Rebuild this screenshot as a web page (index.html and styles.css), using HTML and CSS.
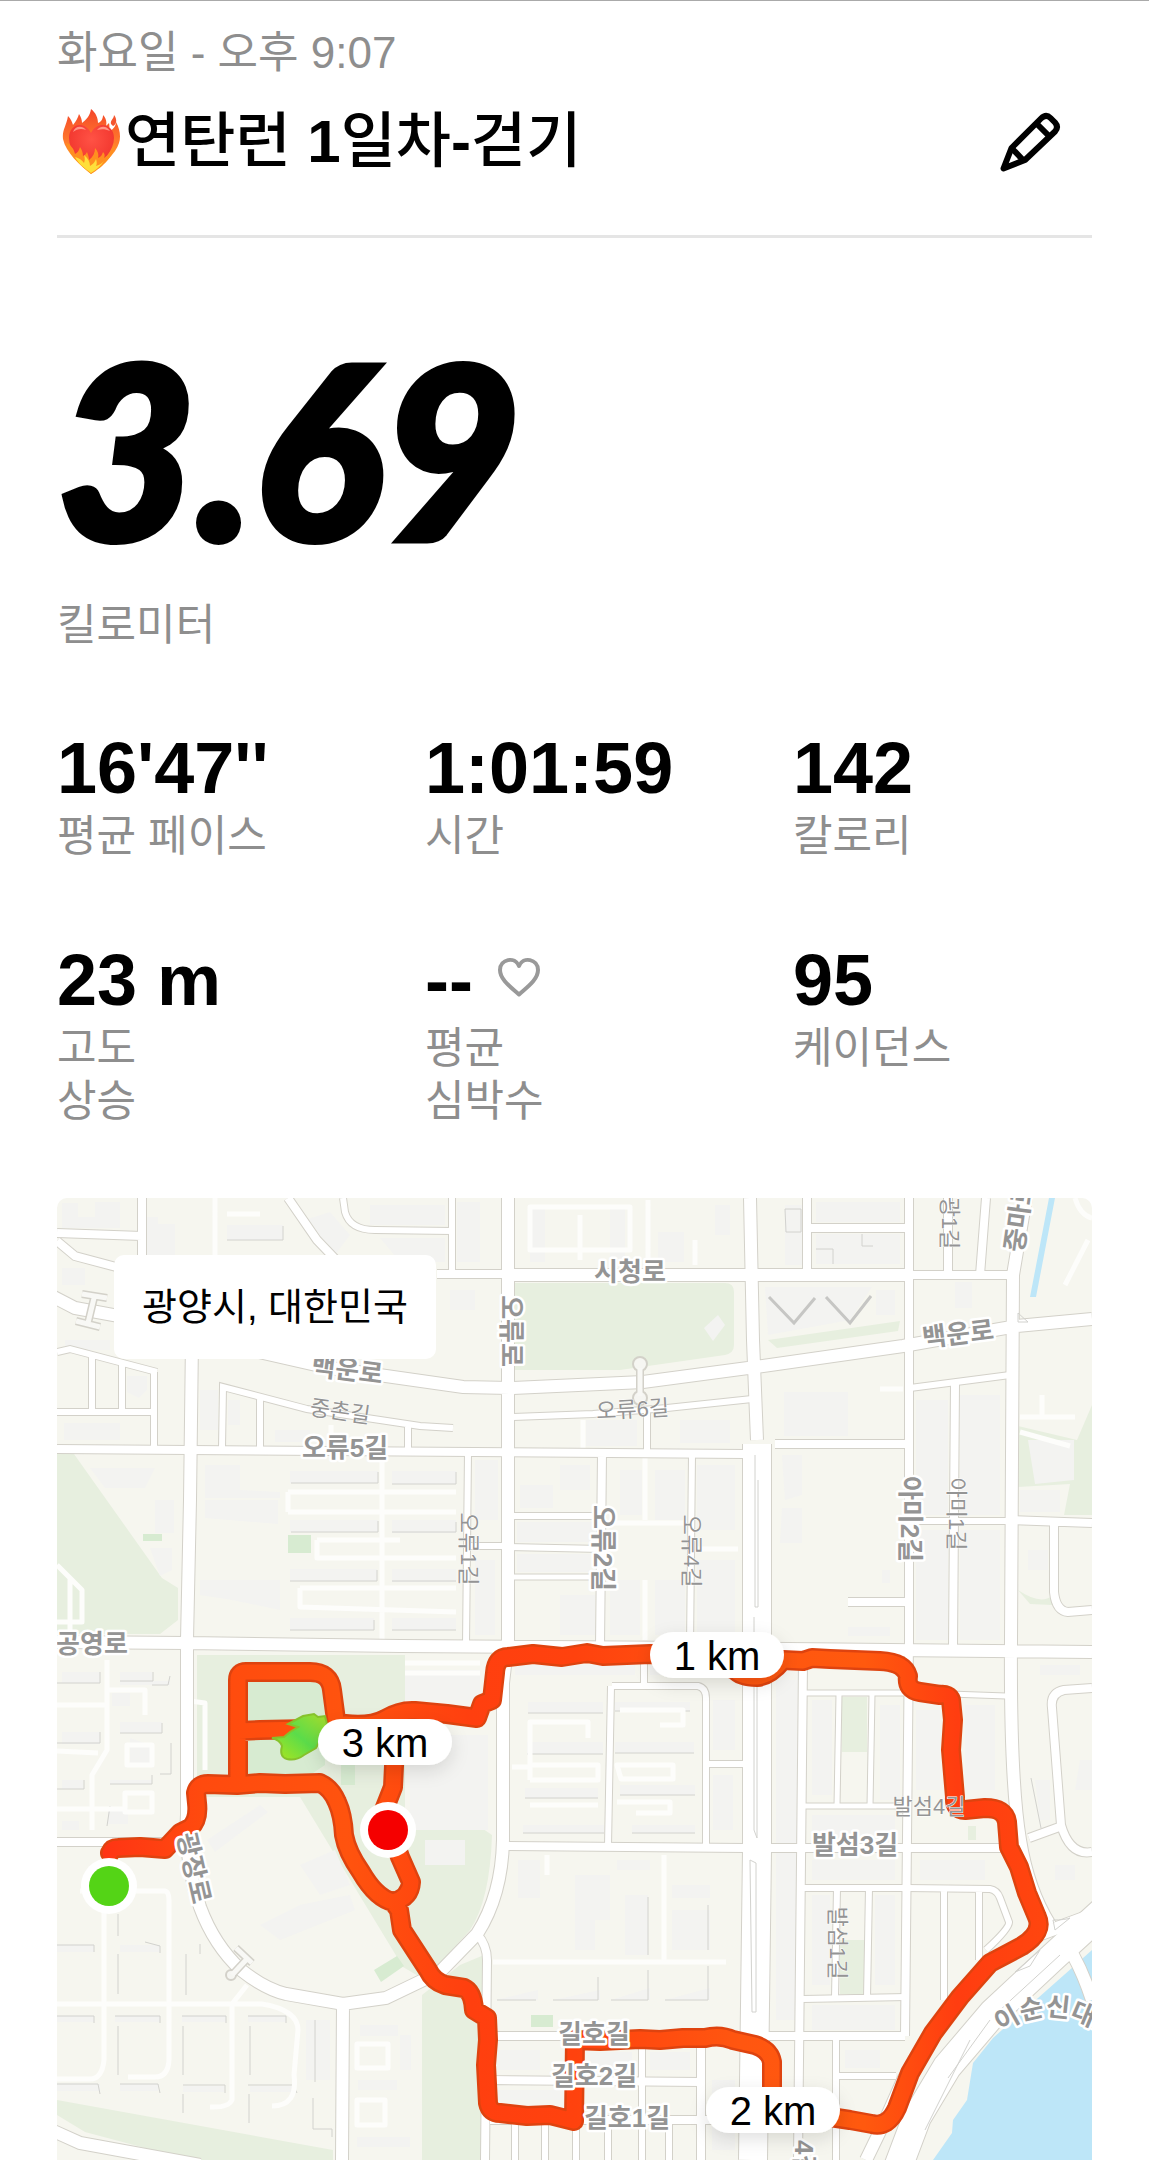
FILE: index.html
```html
<!DOCTYPE html>
<html lang="ko">
<head>
<meta charset="utf-8">
<meta name="viewport" content="width=device-width, initial-scale=1">
<title>연탄런 1일차-걷기</title>
<link rel="stylesheet" href="styles.css">
</head>
<body>
<main class="run">
  <header class="run-header">
    <p class="date">화요일 - 오후 9:07</p>
    <div class="title-row">
      <svg class="emoji" viewBox="0 0 58 66" role="img" aria-label="불타는 하트">
        <defs>
          <linearGradient id="flame" x1="0" y1="0" x2="0" y2="1"><stop offset="0" stop-color="#f4452a"/><stop offset=".5" stop-color="#ff7a2c"/><stop offset="1" stop-color="#ffb52b"/></linearGradient>
          <radialGradient id="heart" cx=".5" cy=".3" r=".7"><stop offset="0" stop-color="#ff5245"/><stop offset="1" stop-color="#ee2f28"/></radialGradient>
        </defs>
        <path fill="url(#flame)" d="M29 65C18 56 4 44 1 30 0 21 4 18 6 7c3 3 4 6 5 9 3-4 5-7 6-11 2 3 3 6 3 9 4-3 8-7 9-14 5 4 7 9 7 14 3-1 5-4 5-8 3 3 4 7 3 11l3-3c1 4 0 7-1 9 5-2 8-6 8-10 4 7 5 15 3 21C54 45 40 56 29 65Z"/>
        <path fill="#f4552f" d="M49 15c-1-4 3-5 3-9 4 5 2 10-1 11Z"/>
        <path fill="url(#heart)" d="M29 63C17 53 7 41 7 29 7 15 22 11 29 24 36 11 52 15 52 29 52 41 41 53 29 63Z"/>
        <path fill="#ff9588" d="M11 23c2-6 9-7 13-2-5-2-9-1-13 2ZM35 21c4-5 10-4 13 1-5-2-8-2-13-1Z"/>
        <path fill="#ff8f20" d="M29 65C19 57 7 46 4 34c5 2 8 6 9 11 2-1 4-3 5-7 2 3 3 6 3 9 2-1 3-2 4-4 1 3 2 5 2 8 4-3 6-7 6-12 3 3 4 7 3 10 3-1 4-3 5-6 2 2 2 4 1 6 5-3 8-8 11-14 0 11-12 23-24 30Z"/>
        <path fill="#ffdf3a" d="M29 64c-7-5-13-10-16-16 4 1 7 3 9 6 1-3 1-5 0-8 4 3 6 7 6 11 3-2 5-4 6-7 1 3 1 5 0 7 4-1 6-3 8-5-3 5-8 9-13 12Z"/>
      </svg>
      <h1 class="title">연탄런 <b>1</b>일차<b>-</b>걷기</h1>
      <button class="edit" type="button" aria-label="편집">
        <svg viewBox="0 0 64 64" class="edit-icon">
          <path d="M5.500 58.500 13.500 38 43 8.500Q48 3.500 52.500 8L57 12.500Q61 17 57 21.500L27 50Z"/>
          <path d="M39 14 50 25M13.500 38 25 50"/>
        </svg>
      </button>
    </div>
  </header>

  <section class="distance">
    <p class="distance-value">3.69</p>
    <p class="label">킬로미터</p>
  </section>

  <dl class="stats">
    <div class="stat"><dd class="value">16'47''</dd><dt class="label">평균 페이스</dt></div>
    <div class="stat"><dd class="value">1:01:59</dd><dt class="label">시간</dt></div>
    <div class="stat"><dd class="value">142</dd><dt class="label">칼로리</dt></div>
    <div class="stat"><dd class="value">23 m</dd><dt class="label">고도<br>상승</dt></div>
    <div class="stat">
      <dd class="value">--
        <svg class="heart" viewBox="0 0 44 40" aria-hidden="true"><path d="M22 37.500C15 31 3 23 3 13 3 2 18-1 22 9 26-1 41 2 41 13 41 23 29 31 22 37.500Z"/></svg>
      </dd>
      <dt class="label">평균<br>심박수</dt>
    </div>
    <div class="stat"><dd class="value">95</dd><dt class="label">케이던스</dt></div>
  </dl>

  <section class="map" aria-label="경로 지도">
    <svg class="map-canvas" viewBox="57 1198 1035 962">
      <defs>
        <g id="roads">
          <g class="w5">
            <path d="M508 1577H602M805 1693H905M950 1694 1006 1696M839 1694 837 1806M872 1694 870 1806M803 1806H905"/>
          </g>
          <g class="w6">
            <path d="M513 1417 593 1414 667 1408 752 1399M910 1388 1010 1375M452 1198V1274M343 1198 345 1212Q350 1230 375 1230L452 1231M57 1352 70 1349 157 1372M92 1356V1412M122 1364V1412M154 1372V1449M57 1412H154M222 1448 223 1387 307 1409 420 1426 453 1428M260 1398V1448M408 1425V1450M468 1452 466 1645M647 1408V1452M692 1455 690 1647M508 1516H602M508 1547 602 1549M467 1546H507M909 1521H1011"/>
            <path d="M612 1686H698Q706 1688 706 1698V1846M611 1686 608 1846M644 1655V1686M707 1764H745M642 2042V2160M515 2122V2160M545 2122V2160M576 2122V2160M608 2122V2160M669 2122V2160M803 1888 907 1888 990 1889Q997 1890 1000 1898L1009 1922Q1010 1928 986 1950M837 1888 835 1998M869 1888 867 1998M803 1999 907 1997M944 1889V2000M979 1889V1960M838 2076H896M836 2040V2160"/>
          </g>
          <g class="w8">
            <path d="M142 1198V1258M57 1233 142 1236M57 1241 75 1256 120 1268M288 1198 317 1240 340 1264M57 1449 745 1454M437 1274H508M807 1198V1275M909 1198V1640L905 2036M807 1228H909M948 1198V1275M986 1198 980 1275M775 1444H909M955 1383 953 1648M602 1453 600 1647M1011 1520 1092 1523M1054 1522V1592Q1056 1611 1068 1612L1092 1610M848 1602H909"/>
            <path d="M503 1846 745 1848M770 1848H1008M477 1934Q487 1945 487 1960L485 2160M490 2036H905M490 2080 701 2082M490 2120H740M701 2040V2160M803 1662 798 2160M1092 1688 1064 1690Q1050 1693 1052 1708L1061 1825Q1070 1856 1092 1852M1029 1838 1062 1826M57 1842H187M908 1275H1014"/>
          </g>
          <g class="w12">
            <path d="M57 1642 187 1643 400 1646 700 1648 1092 1652M192 1340 190 1500 187 1640V1815Q184 1860 200 1907 214 1945 241 1970 265 1989 286 1994L343 2004 386 1998 440 1972 477 1934Q502 1895 503 1840V1683L508 1640V1198M343 2004 342 2160M508 1275H909M750 1198 753 1340 757 1440M1026 1198 1013 1275 1011 1640Q1010 1780 1020 1840 1028 1890 1050 1925M40 1290 75 1308 130 1318 250 1350 330 1368 400 1378 463 1387 513 1388 643 1382 763 1366 903 1346 1017 1326 1092 1319"/>
            <path d="M1050 1928 990 1965 960 2000 927 2040 903 2080 883 2125 866 2160M40 2125 80 2143 200 2165M1092 1915 1030 1938M1073 1955Q1084 1975 1092 2000"/>
          </g>
          <g class="w24">
            <path d="M757 1444V1850L753 2160M1110 1905 1053 1957 993 2013 947 2067 917 2117 897 2170"/>
          </g>
        </g>
        <g id="track">
          <path d="M110 1853Q112 1848 118 1848L140 1847 165 1849 180 1833 190 1828Q199 1820 197 1803L196 1793Q198 1784 208 1784L237 1785 260 1783 285 1784 320 1783Q331 1788 337 1802 343 1815 344 1835 347 1852 361 1872 376 1898 393 1902 410 1898 411 1882L400 1857 384 1810 393 1787 395 1745M393 1902 399 1910 402 1930 428 1970Q433 1981 445 1985L464 1988Q473 1992 474 2010L487 2018 488 2040 486 2065 488 2103Q490 2113 500 2113L527 2116 550 2115 574 2121 575 2040 600 2041 640 2039 660 2040 683 2038 705 2038Q720 2034 733 2040L755 2045Q770 2050 772 2062V2100M830 2117 850 2120 872 2124Q888 2128 897 2108L910 2073 933 2033 960 1997 990 1963 1022 1946Q1044 1932 1037 1917L1027 1893 1019 1867 1009 1847 1007 1822Q1005 1808 985 1808L965 1810Q954 1810 955 1797L951 1750 953 1720 951 1700Q949 1694 940 1695L920 1692Q906 1690 908 1676 904 1662 880 1661L830 1659 812 1658 803 1661 783 1660Q770 1676 757 1677 741 1677 735 1670L700 1655 650 1654 603 1656 587 1653 562 1657 533 1654 508 1657Q496 1657 495 1673L492 1700 482 1704 477 1718 447 1714 415 1711Q400 1710 385 1719 370 1727 345 1724M238 1785V1680Q238 1672 246 1672L310 1672Q330 1672 332 1690L336 1720 345 1735M238 1731 260 1730 310 1729"/>
        </g>
        <linearGradient id="heat" gradientUnits="userSpaceOnUse" x1="57" y1="0" x2="1092" y2="0">
          <stop offset=".04" stop-color="#ff3314"/><stop offset=".14" stop-color="#ff4a0e"/><stop offset=".28" stop-color="#ff530e"/><stop offset=".4" stop-color="#ff3f0f"/><stop offset=".5" stop-color="#ff420e"/><stop offset=".66" stop-color="#ff5610"/><stop offset=".78" stop-color="#ff590e"/><stop offset=".87" stop-color="#ff3d10"/><stop offset="1" stop-color="#ff4a0e"/>
        </linearGradient>
        <linearGradient id="slow" x1="0" y1="1" x2="1" y2="0">
          <stop offset="0" stop-color="#b4e619"/><stop offset=".5" stop-color="#5bdc4a"/><stop offset="1" stop-color="#a8dc2a"/>
        </linearGradient>
        <path id="bridge-line" d="M1001 2033Q1055 1994 1114 2044"/>
        <filter id="pill-shadow" x="-30%" y="-50%" width="160%" height="220%"><feDropShadow dx="0" dy="6" stdDeviation="9" flood-opacity=".12"/></filter>
      </defs>

      <rect class="land" x="57" y="1198" width="1035" height="962"/>
      <g class="park">
        <path d="M57 1454H74L162 1578 178 1588V1620L160 1634H57ZM515 1283H725Q734 1283 734 1292V1345Q734 1353 725 1355L620 1370H513Z"/>
        <path d="M197 1655H405V1820H470L492 1835Q490 1900 470 1930L425 1980 403 1967 300 1797H197ZM422 1995 460 1965 484 1955V2160H422ZM57 2100 333 2150V2160H190L85 2132 57 2115Z"/>
        <path d="M842 1697H867V1752H842ZM840 1940H864V1994H840ZM768 1340 900 1321 898 1331 777 1348ZM1018 1426 1077 1440 1092 1405V1515H1064L1070 1484 1018 1487ZM1018 1590Q1040 1605 1052 1596V1605L1030 1604ZM968 1826H976V1840H968Z"/>
      </g>
      <g class="grass">
        <path d="M248 1682H325V1765L310 1775H248ZM341 1753H355V1785H341ZM143 1534H162V1541H143ZM288 1535H311V1553H288ZM531 2015H553V2027H531ZM374 1970 397 1956 404 1966 381 1982Z"/>
      </g>
      <path class="water" d="M1073 1967 993 2038 973 2063 967 2100 953 2120 952 2133 933 2160H1092V1950ZM1049 1198H1055L1036 1297H1030Z"/>
      <g class="building">
        <path d="M62 1203H78V1217H95V1202H120V1228H62ZM147 1217H158V1224H175V1270H147ZM227 1225H283V1240H227ZM305 1220 330 1212 350 1235 335 1255ZM370 1205H445V1225H370ZM380 1238H445V1262H400ZM457 1202H480V1262H457ZM450 1290H475V1310H450ZM62 1268H85V1285H62ZM65 1340H110V1350H65ZM127 1376H147V1390L139 1398 127 1392ZM64 1423H120V1440H64ZM200 1390H218V1430H200ZM228 1400H240V1425H228ZM275 1430H310V1442H275Z"/>
        <path d="M90 1468H155L145 1488H105ZM155 1500H174V1533H155ZM205 1465H240V1490L280 1492V1498H205ZM205 1500H278V1524L205 1518ZM290 1471H378V1483H290ZM392 1471H456V1484H392ZM290 1520H378V1532H290ZM392 1520H456V1533H392ZM290 1569H377V1581H290ZM392 1569H456V1582H392ZM290 1618H374V1630H290ZM392 1618H456V1630H392ZM200 1580H280V1610L232 1600 200 1595ZM150 1548H172V1570L160 1576Z"/>
        <path d="M658 1232H684V1262H658ZM715 1205H730V1235H715ZM530 1208H545V1262H530ZM610 1206H625V1262H610ZM704 1328 718 1315 725 1325 713 1341ZM586 1420H637V1446H586ZM680 1420H730V1443H680ZM520 1485H553V1508H520ZM560 1465H590V1490H560ZM620 1470H642V1515H620ZM655 1470H685V1520H655ZM697 1465H735V1530H697ZM517 1522H595V1542H517ZM517 1554H590V1572H517ZM560 1595H595V1635H560ZM610 1580H640V1635H610ZM655 1580H685V1635H655ZM697 1560H735V1635H697ZM475 1460H498V1520H475ZM475 1560H495V1635H475Z"/>
        <path d="M765 1287H872L850 1320 768 1335ZM876 1290H895V1315H876ZM785 1205H802V1265H785ZM816 1202H900V1222H816ZM816 1234H900V1264H816ZM784 1392H848V1436H784ZM782 1455H802V1495L785 1500ZM782 1508H802V1543H780ZM955 1282H972V1308H955ZM916 1400H948V1515H916ZM960 1395H1000V1515H960ZM916 1530H948V1640H916ZM960 1530H1000V1640H960ZM1028 1440H1074V1480L1035 1484ZM1020 1490H1060V1512H1020ZM1028 1550H1048V1570H1028ZM882 1570H890V1583H882ZM848 1627H890V1636H848Z"/>
        <path d="M62 1672H100V1683H62ZM120 1672H152V1681H170V1685H120ZM62 1732H100V1744H62ZM120 1722H162V1733H120ZM112 1693H130V1706H112ZM130 1738 150 1745V1765H130ZM62 1780H83V1789H62ZM110 1780H152V1784H110ZM108 1808H128V1824H108ZM62 1821H79V1830H62ZM57 1945H94V1952H57ZM120 1945H160V1952H120ZM57 2016H94V2022H57ZM115 2016H160V2022H115ZM182 2016H226V2022H182ZM248 2016H286V2022H248ZM57 2084H100V2091H57ZM120 2084H158V2091H120ZM183 2086H224V2092H183ZM250 2086H295V2092H250ZM306 2020H330V2080H306Z"/>
        <path d="M207 1840 260 1805 268 1812 215 1852ZM300 1865 335 1850 350 1885 320 1895ZM260 1925 300 1905 350 1895 355 1910 280 1940ZM405 1670H480V1700H405ZM410 1735H488V1830H410ZM425 1840H465V1865H425ZM360 2025H398V2036H360ZM400 2035H411V2070H400ZM358 2080H397V2090H358ZM357 2137H410V2147H357ZM515 1665H635V1675H515ZM650 1665H735V1675H650ZM527 1742H603V1754H527ZM525 1788H598V1798H525ZM523 1825H604V1833H523ZM528 1702H603V1713H528ZM615 1702H690V1711H615ZM615 1742H694V1753H615ZM620 1785H695V1795H620ZM632 1825H695V1833H632ZM713 1700H735V1750H713ZM713 1775H733V1830H713Z"/>
        <path d="M518 1860H540V1898H518ZM575 1875H610V1920H595V1950H575ZM617 1860H650V1870H617ZM625 1895H648V1955H625ZM672 1885H710V1898H672ZM672 1910H710V1950H672ZM495 2000 538 1990V2000ZM553 2000 600 1990V2000ZM611 2000 650 1988V2000ZM665 2000 710 1988V2000ZM776 1680H798V2020H776ZM812 1700H832V1795H812ZM880 1705H900V1800H880ZM916 1710H940V1790H916ZM965 1705H995V1790H965ZM812 1815H895V1838H812ZM812 1860H895V1880H812ZM920 1860H985V1880H920ZM812 1895H830V1985H812ZM875 1895H895V1985H875ZM812 2005H895V2030H812ZM1040 1665H1080V1675H1040ZM1080 1760H1092V1790H1075ZM1035 1780H1050V1820H1040ZM1055 1865H1075V1880H1055ZM845 2050H880V2068H845ZM495 2050H540V2070H495ZM590 2052H632V2070H590ZM650 2052H690V2070H650ZM495 2090H560V2100H495ZM712 2080H735V2150H712Z"/>
      </g>
      <g class="wall">
        <path d="M227 1240H283V1226M291 1483H378V1472M392 1484H456V1472M291 1532H378V1521M392 1532H456V1522M290 1581H377V1570M392 1581H456M290 1630H374V1620M392 1630H456M57 1683H100V1672M120 1681H153V1672M152 1685H168L170 1676M57 1743H100V1732M120 1733H162V1723M171 1743V1774H160M84 1780V1789H57M152 1775V1784H110M110 1806 107 1826M118 1914V1936M118 1954V1994M186 1954V1995M118 2026V2075M183 2026V2075M250 2026V2075M183 2094V2113M249 2094V2123M57 1945H94V1952M145 1942 160 1946V1953M200 1944V1954M57 2016H94V2023M115 2016H160V2023M182 2016H226V2023M248 2016H286V2023M57 2084H98L100 2094M120 2084H158L160 2093M183 2085H225V2093M248 2085H293L297 2093M315 2020V2082M313 2098V2129H332V2137"/>
        <path d="M528 1713H603M615 1711H690M527 1754H603M615 1753H694M525 1798H598M620 1795H695M523 1833H604M632 1833H695M497 2000H536M553 2000H598V1977M611 2000H648V1970M665 2000H708V1966M708 1950V1905M648 1955V1897M816 1249H833V1264M862 1234V1246H873M785 1209H801V1232H786ZM1031 1778 1041 1828"/>
      </g>
      <g class="slate"><path d="M769 1297 794 1323 815 1298M826 1297 850 1323 871 1296"/></g>
      <g class="service">
        <path d="M215 1198V1255M227 1214H260M530 1207H630V1250H530ZM580 1215V1260M648 1200V1265M695 1240V1265M288 1492H456M288 1512H456M288 1492V1512M317 1540H400M317 1540V1558H456M300 1588H456M300 1588V1607L456 1612M382 1455V1640M645 1455V1520M602 1523H690M645 1580V1640M583 1420V1450M331 1425V1448M57 1565 82 1590V1622H57M70 1577V1634"/>
        <path d="M107 1660V1750L92 1775V1830M57 1705H106M107 1690H145V1715M57 1751 98 1753M57 1809H125M127 1745H152V1765H127ZM125 1793H152V1812H125ZM190 1701 205 1703V1770M80 1891H165Q169 1892 169 1900V2060Q168 2077 155 2077H128M104 1910V2060Q102 2079 90 2079H57M57 2004H262Q298 2010 298 2030L294 2075Q298 2106 272 2106M247 1985 232 2004V2100Q228 2108 210 2107M357 2044H388V2068H357ZM357 2100H385V2125H357Z"/>
        <path d="M405 1663H480M405 1673H480M530 1780V1722H588V1738M543 1722H585M530 1780H598V1765H530M617 1765H673V1779H621ZM617 1802H670V1813H636M620 1710H683V1725H660M512 1767H530M493 1962H726M664 1855V1960M547 1855V1875M530 1805H598M1020 1417H1075M1042 1395V1415M1020 1432 1070 1446M1065 1285 1088 1240M880 1389H903M697 1549H738M1075 1198Q1080 1215 1092 1218"/>
      </g>

      <use href="#roads" class="casing"/>
      <use href="#roads" class="surface"/>
      <g class="wall">
        <path d="M755 1455V1607H758V1480M754 1617V1830L757 1838V1650M750 1860 756 1863V2012H752ZM1060 1955 1000 2010M1040 1950 1015 1972 1030 1966ZM970 2040 925 2130M948 2078 990 2020M1053 1920Q1065 1920 1070 1918L1055 1930ZM1018 1313V1322H1028Z"/>
      </g>
      <g class="footbridge-edge">
        <path d="M640 1368V1396M94 1298 88 1323M82 1294 107 1298M76 1321 100 1327M246 1960 232 1975M236 1948 252 1963"/>
        <circle cx="640" cy="1364" r="7"/><circle cx="640" cy="1398" r="7"/><circle cx="231" cy="1975" r="5"/>
      </g>
      <g class="footbridge-deck">
        <path d="M640 1368V1396M94 1298 88 1323M82 1294 107 1298M76 1321 100 1327M246 1960 232 1975M236 1948 252 1963"/>
      </g>

      <use href="#track" class="track-edge"/>
      <use href="#track" class="track-core"/>
      <path class="slow" d="M272 1738Q280 1740 282 1746 279 1757 287 1759 296 1761 304 1755L316 1748Q320 1742 322 1734L327 1724 325 1716 318 1717 314 1714 303 1716 288 1724 298 1727 290 1732 284 1737Z"/>

      <g class="road-name">
        <text x="630" y="1281">시청로</text>
        <text transform="translate(502 1331) rotate(90)">오류로</text>
        <text transform="translate(346 1379) rotate(7)">백운로</text>
        <text x="345" y="1457">오류5길</text>
        <text x="92" y="1653">공영로</text>
        <text transform="translate(594 1548) rotate(90)">오류2길</text>
        <text transform="translate(959 1343) rotate(-7)">백운로</text>
        <text class="from-start" transform="translate(1023 1253) rotate(-82)">중마로</text>
        <text transform="translate(901 1519) rotate(90)">아미2길</text>
        <text x="855" y="1854">발섬3길</text>
        <text transform="translate(185 1870) rotate(77)">광장로</text>
        <text x="594" y="2043">길호길</text>
        <text x="594" y="2085">길호2길</text>
        <text x="627" y="2127">길호1길</text>
        <text class="from-start" transform="translate(795 2140) rotate(90)">4길</text>
        <text class="from-start"><textPath href="#bridge-line">이순신대로</textPath></text>
      </g>
      <g class="lane-name">
        <text transform="translate(339 1419) rotate(8)">중촌길</text>
        <text transform="translate(633 1417) rotate(-3)">오류6길</text>
        <text transform="translate(461 1549) rotate(90)">오류1길</text>
        <text transform="translate(684 1551) rotate(90)">오류4길</text>
        <text transform="translate(942 1223) rotate(90)">광1길</text>
        <text transform="translate(949 1514) rotate(90)">아미1길</text>
        <text x="929" y="1814">발섬4길</text>
        <text transform="translate(830 1943) rotate(90)">발섬1길</text>
      </g>

      <g class="pin">
        <circle class="pin-ring" cx="109" cy="1886" r="28"/><circle class="pin-start" cx="109" cy="1886" r="20"/>
        <circle class="pin-ring" cx="388" cy="1830" r="28"/><circle class="pin-end" cx="388" cy="1830" r="20"/>
      </g>
      <g class="pill">
        <rect x="650" y="1632" width="134" height="46" rx="23"/>
        <rect x="318" y="1719" width="134" height="46" rx="23"/>
        <rect x="706" y="2087" width="134" height="46" rx="23"/>
      </g>
      <g class="pill-text">
        <text x="717" y="1670">1 km</text>
        <text x="385" y="1757">3 km</text>
        <text x="773" y="2125">2 km</text>
      </g>
    </svg>
    <p class="place">광양시, 대한민국</p>
  </section>
</main>
</body>
</html>
```
FILE: styles.css
```css
* {
  box-sizing: border-box;
}

body {
  margin: 0;
  background: #fff;
  color: #000;
  font-family: "Liberation Sans", "Noto Sans CJK KR", sans-serif;
}

p,
h1,
dl,
dd {
  margin: 0;
}

.run {
  padding: 24px 57px 0;
  border-top: 1px solid #aaa;
}

.run-header {
  padding-bottom: 53px;
  border-bottom: 3px solid #e5e5e5;
}

.date {
  color: #8e8e8e;
  font-size: 44px;
  line-height: 56px;
}

.title-row {
  display: flex;
  align-items: center;
  margin-top: 21px;
}

.emoji {
  flex: none;
  width: 58px;
  height: 66px;
  margin: 0 5px;
}

.title {
  flex: 1;
  font-size: 60px;
  font-weight: 500;
  line-height: 80px;
}

.edit {
  flex: none;
  width: 64px;
  height: 64px;
  margin-right: 30px;
  padding: 0;
  border: 0;
  background: none;
}

.edit-icon {
  display: block;
  fill: none;
  stroke: #000;
  stroke-width: 6;
  stroke-linejoin: round;
}

.distance {
  margin-top: 89px;
}

.distance-value {
  -webkit-text-stroke: 6px #000;
  font-family: Lato, sans-serif;
  font-size: 240px;
  font-style: italic;
  font-weight: 900;
  line-height: 240px;
}

.distance .label {
  margin-top: 32px;
}

.label {
  color: #8e8e8e;
  font-size: 43px;
  line-height: 53px;
}

.stats {
  display: grid;
  grid-template-columns: repeat(3, 1fr);
  gap: 79px 69px;
  margin: 78px 0 70px;
}

.stat {
  display: flex;
  flex-direction: column;
  gap: 4px;
}

.value {
  display: flex;
  align-items: center;
  gap: 24px;
  font-size: 72px;
  font-weight: 700;
  line-height: 76px;
  white-space: nowrap;
}

.heart {
  width: 44px;
  height: 40px;
  margin-bottom: 6px;
  fill: none;
  stroke: #999;
  stroke-width: 4;
  stroke-linejoin: round;
}

.map {
  position: relative;
  overflow: hidden;
  border-radius: 10px 10px 0 0;
}

.map-canvas {
  display: block;
  width: 100%;
  height: auto;
}

.place {
  position: absolute;
  top: 57px;
  left: 57px;
  padding: 26px 28px;
  border-radius: 10px;
  background: #fff;
  font-size: 38px;
  line-height: 52px;
}

.land { fill: #f6f6ef; }
.park { fill: #e7efdf; }
.grass { fill: #d7ebd1; }
.water { fill: #bde6f8; }
.building { fill: #f3f3f1; }

.wall,
.slate,
.service,
.casing,
.surface,
.track-edge,
.track-core {
  fill: none;
}

.wall {
  stroke: #d2d2ce;
  stroke-width: 1;
}

.slate {
  stroke: #c6c6c4;
  stroke-width: 3;
}

.service {
  stroke: #fdfdfb;
  stroke-width: 5;
  stroke-linejoin: round;
}

.w5 { stroke-width: calc(5px + var(--edge)); }
.w6 { stroke-width: calc(6px + var(--edge)); }
.w8 { stroke-width: calc(8px + var(--edge)); }
.w12 { stroke-width: calc(12px + var(--edge)); }
.w24 { stroke-width: calc(28px + var(--edge)); }

.casing {
  --edge: 2px;
  stroke: #d3d1c9;
}

.surface {
  --edge: 0px;
  stroke: #fff;
}

.footbridge-edge {
  fill: #f6f6f2;
  stroke: #d3d1c9;
  stroke-width: 2;
}

.footbridge-edge path {
  stroke-width: 8;
}

.footbridge-deck {
  fill: none;
  stroke: #f8f8f5;
  stroke-width: 5;
}

.track-edge,
.track-core {
  stroke-linecap: round;
  stroke-linejoin: round;
}

.track-edge {
  stroke: #de430f;
  stroke-width: 20;
}

.track-core {
  stroke: url(#heat);
  stroke-width: 15;
}

.slow {
  fill: url(#slow);
  stroke: #86c22c;
  stroke-width: 2;
}

.road-name,
.lane-name {
  fill: #949494;
  text-anchor: middle;
  paint-order: stroke;
  stroke: #fff;
  stroke-linejoin: round;
}

.road-name {
  font-size: 26px;
  font-weight: 700;
  stroke-width: 5;
}

.lane-name {
  font-size: 22px;
  stroke-width: 1;
}

.from-start {
  text-anchor: start;
}

.pin-ring { fill: #fff; }
.pin-start { fill: #54d416; }
.pin-end { fill: #f50000; }

.pill {
  fill: #fff;
  filter: url(#pill-shadow);
}

.pill-text {
  font-size: 40px;
  text-anchor: middle;
}
```
